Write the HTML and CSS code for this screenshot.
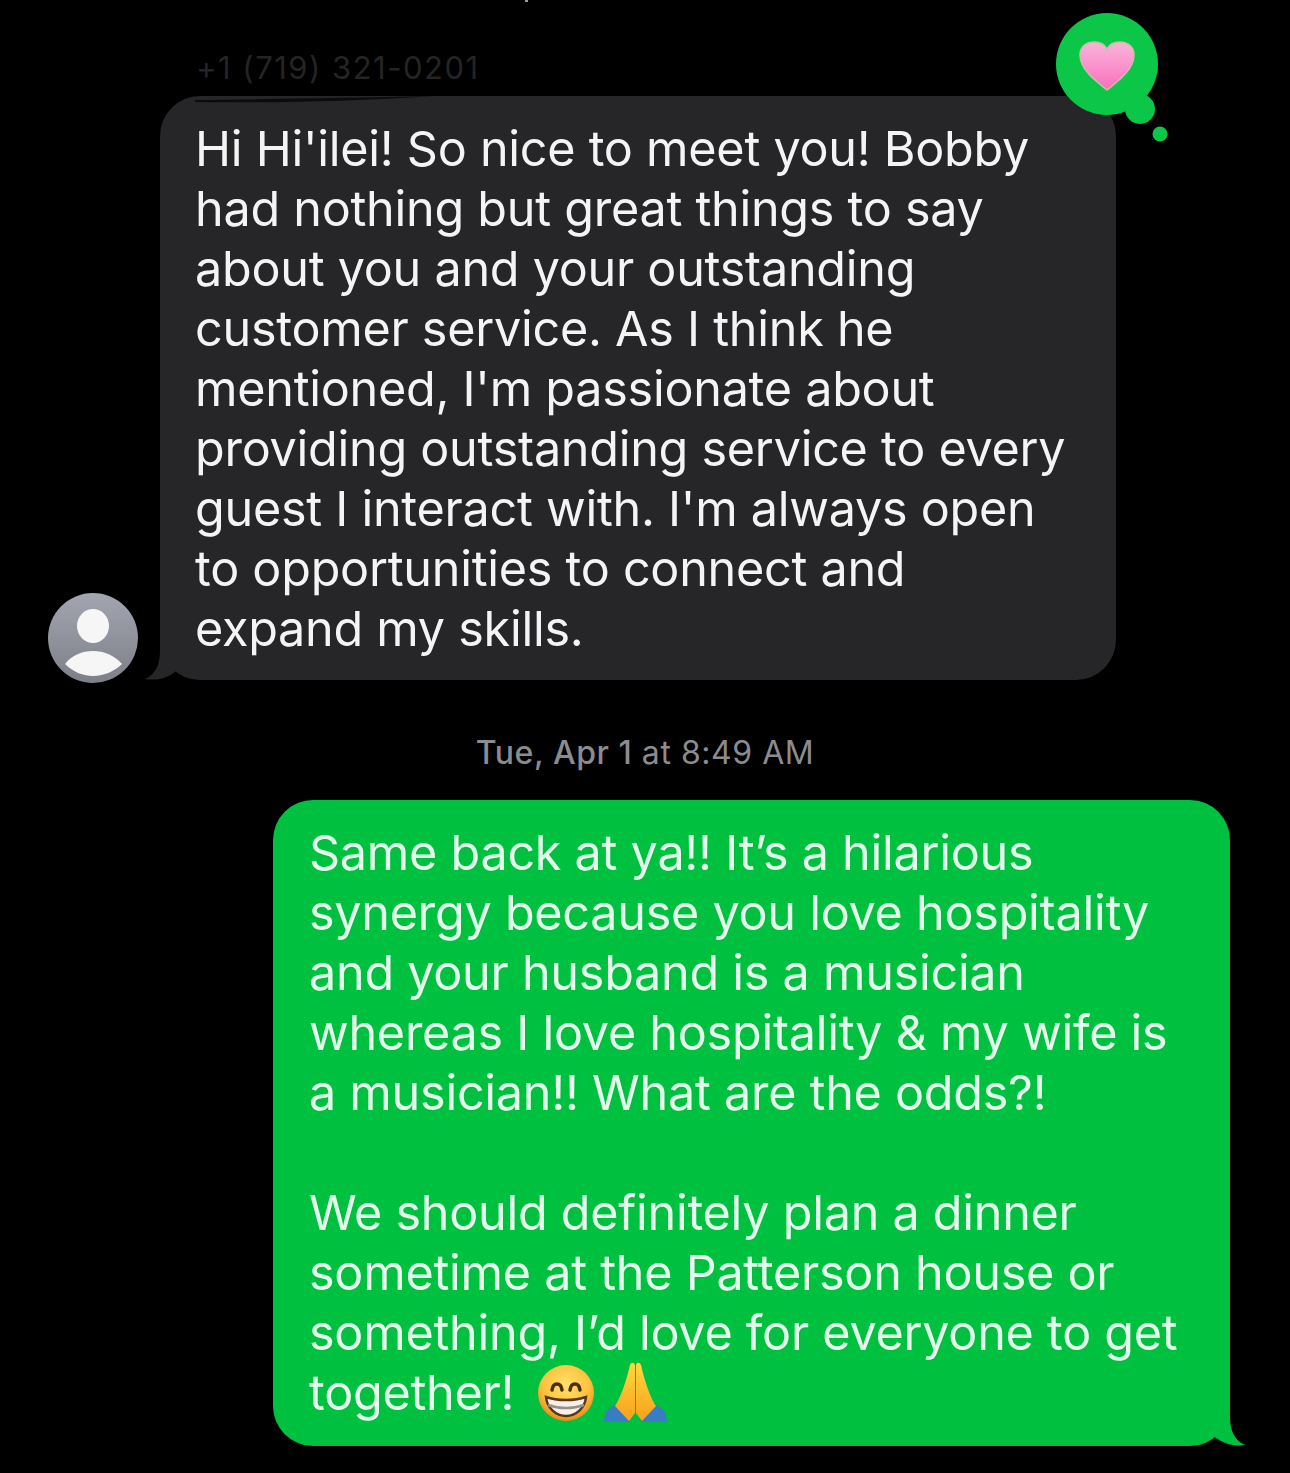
FILE: index.html
```html
<!DOCTYPE html>
<html lang="en">
<head>
  <meta charset="UTF-8">
  <meta name="viewport" content="width=device-width, initial-scale=1.0">
  <title>Messages</title>
  <link rel="stylesheet" href="styles.css">
</head>
<body>
  <div class="thread">
    <div class="cut-off"><span class="cut-off-mark"></span></div>
    <div class="sender">+1 (719) 321-0201</div>

    <div class="incoming-row">
      <svg class="avatar" viewBox="0 0 90 90" aria-hidden="true">
        <defs>
          <linearGradient id="avatarBg" x1="0" y1="0" x2="0" y2="1">
            <stop offset="0" stop-color="#a3a6b0"/>
            <stop offset="1" stop-color="#7d8089"/>
          </linearGradient>
        </defs>
        <circle cx="45" cy="45" r="45" fill="url(#avatarBg)"/>
        <ellipse cx="45" cy="33" rx="16" ry="17" fill="#f6f6f7"/>
        <path d="M17 71 C24 62 34 58 45 58 C56 58 66 62 74 71 C67 78 56 83 45 83 C34 83 24 78 17 71 Z" fill="#f6f6f7"/>
      </svg>

      <div class="bubble bubble-in">
        Hi Hi'ilei! So nice to meet you! Bobby<br>
        had nothing but great things to say<br>
        about you and your outstanding<br>
        customer service. As I think he<br>
        mentioned, I'm passionate about<br>
        providing outstanding service to every<br>
        guest I interact with. I'm always open<br>
        to opportunities to connect and<br>
        expand my skills.
        <svg class="tail tail-in" viewBox="0 0 40 42" aria-hidden="true">
          <path d="M35 0 L15 0 L15 12 C15 24 12 36 0 41 C12 43 25 40 33 31 Z" fill="#262628"/>
        </svg>
        <svg class="smudge" viewBox="0 0 240 8" aria-hidden="true">
          <path d="M0 6 C70 7 150 6 240 0 C150 2 70 3 0 4 Z" fill="#0b0b0c"/>
        </svg>
        <svg class="reaction" viewBox="0 0 120 130" aria-hidden="true">
          <defs>
            <linearGradient id="heartFill" x1="0" y1="0" x2="0" y2="1">
              <stop offset="0" stop-color="#f9b4d8"/>
              <stop offset="0.55" stop-color="#fb8fcb"/>
              <stop offset="1" stop-color="#f66fb8"/>
            </linearGradient>
          </defs>
          <circle cx="52" cy="52" r="51" fill="#0cc648"/>
          <circle cx="85" cy="97" r="15" fill="#0cc648"/>
          <circle cx="105" cy="122" r="7.5" fill="#0cc648"/>
          <path d="M52 78 C42 70 25 58 25 43 C25 33 33 30 39 30 C45 30 50 33 52 37 C54 33 59 30 65 30 C71 30 79 33 79 43 C79 58 62 70 52 78 Z" fill="url(#heartFill)" stroke="#c9bfa9" stroke-width="1.5"/>
        </svg>
      </div>
    </div>

    <div class="timestamp"><b>Tue, Apr 1</b> at 8:49 AM</div>

    <div class="bubble bubble-out">
      Same back at ya!! It’s a hilarious<br>
      synergy because you love hospitality<br>
      and your husband is a musician<br>
      whereas I love hospitality &amp; my wife is<br>
      a musician!! What are the odds?!<br>
      <br>
      We should definitely plan a dinner<br>
      sometime at the Patterson house or<br>
      something, I’d love for everyone to get<br>
      together!
      <svg class="emoji emoji-grin" viewBox="0 0 58 58" aria-hidden="true">
        <defs>
          <radialGradient id="grinFace" cx="0.5" cy="0.35" r="0.7">
            <stop offset="0" stop-color="#ffe26a"/>
            <stop offset="0.6" stop-color="#fdc13c"/>
            <stop offset="1" stop-color="#e0801a"/>
          </radialGradient>
        </defs>
        <circle cx="29" cy="29" r="28" fill="url(#grinFace)"/>
        <path d="M15 26 C16 18 24 18 25 26" fill="none" stroke="#4a2e14" stroke-width="3.5" stroke-linecap="round"/>
        <path d="M33 26 C34 18 42 18 43 26" fill="none" stroke="#4a2e14" stroke-width="3.5" stroke-linecap="round"/>
        <path d="M9 33 C20 37 38 37 49 33 C48 44 39 52 29 52 C19 52 10 44 9 33 Z" fill="#f4f1ec" stroke="#5a3414" stroke-width="2.5"/>
        <path d="M11 41 C22 45 36 45 47 41" fill="none" stroke="#9a8f88" stroke-width="2.5"/>
      </svg>
      <svg class="emoji emoji-pray" viewBox="0 0 64 62" aria-hidden="true">
        <defs>
          <linearGradient id="prayHand" x1="0" y1="0" x2="0" y2="1">
            <stop offset="0" stop-color="#ffd83f"/>
            <stop offset="1" stop-color="#f8a01a"/>
          </linearGradient>
        </defs>
        <path d="M0 60 L1 52 C3 47 8 44 14 42 L27 60 Z" fill="#3a7cc4"/>
        <path d="M63 60 L62 52 C60 47 55 44 49 42 L36 60 Z" fill="#3a7cc4"/>
        <path d="M31 51 L25 59 L11 44 C18 34 24 12 26 3 C27 0 31 0 31 4 Z" fill="url(#prayHand)"/>
        <path d="M32 51 L38 59 L52 44 C45 34 39 12 37 3 C36 0 32 0 32 4 Z" fill="url(#prayHand)"/>
      </svg>
      <svg class="tail tail-out" viewBox="0 0 40 42" aria-hidden="true">
        <path d="M5 0 L25 0 L25 12 C25 24 28 36 40 41 C28 43 15 39 5 29 Z" fill="#00c040"/>
      </svg>
    </div>
  </div>
</body>
</html>
```

FILE: styles.css
```css
body {
  margin: 0;
  background-color: #000000;
  font-family: 'Inter', 'Liberation Sans', sans-serif;
}

.thread {
  display: flex;
  flex-direction: column;
  height: 1473px;
  overflow: hidden;
}

.cut-off {
  height: 54px;
  padding-left: 525px;
}

.cut-off-mark {
  display: block;
  width: 3px;
  height: 2px;
  background: #9a9a9a;
}

.sender {
  height: 42px;
  padding-left: 196px;
  font-size: 31px;
  line-height: 28px;
  letter-spacing: 1.5px;
  color: #242424;
}

.incoming-row {
  display: flex;
  align-items: flex-end;
  gap: 22px;
  padding-left: 48px;
}

.avatar {
  width: 90px;
  height: 90px;
  margin-bottom: -3px;
  flex-shrink: 0;
}

.bubble {
  position: relative;
  font-size: 48.5px;
  line-height: 60px;
  letter-spacing: -0.25px;
  white-space: nowrap;
  border-radius: 40px;
}

.bubble-in {
  width: 921px;
  padding: 23px 0 21px 35px;
  background: #262628;
  color: #f4f4f4;
}

.bubble-out {
  width: 921px;
  margin-left: 273px;
  padding: 23px 0 23px 36px;
  background: #00c040;
  color: #e4fbec;
}

.timestamp {
  margin-top: 53px;
  margin-bottom: 27px;
  height: 40px;
  text-align: center;
  font-size: 32px;
  line-height: 40px;
  letter-spacing: 0.55px;
  color: #8c8c8e;
}

.timestamp b {
  font-weight: 500;
}

.tail {
  position: absolute;
  bottom: 0;
  width: 40px;
  height: 42px;
}

.tail-in {
  left: -15px;
}

.tail-out {
  right: -15px;
}

.smudge {
  position: absolute;
  top: 0;
  left: 35px;
  width: 240px;
  height: 8px;
}

.reaction {
  position: absolute;
  top: -84px;
  left: 895px;
  width: 120px;
  height: 130px;
}

.emoji {
  display: inline-block;
  vertical-align: middle;
  margin-top: -14px;
  margin-bottom: -6px;
}

.emoji-grin {
  width: 58px;
  height: 58px;
  margin-left: 9px;
}

.emoji-pray {
  width: 64px;
  height: 62px;
  margin-left: -4px;
}
```
